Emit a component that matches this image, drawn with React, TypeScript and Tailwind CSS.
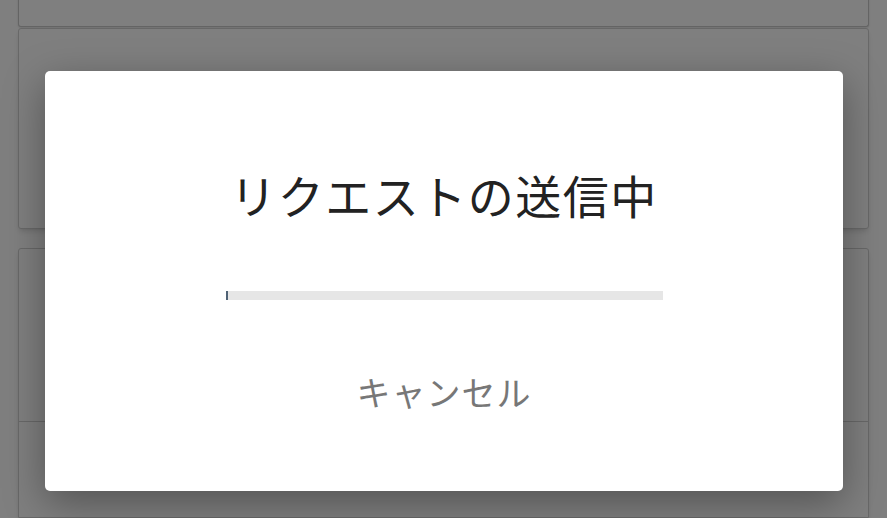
import React from 'react';

const App: React.FC = () => {
    return (
        <div
            className="relative w-[887px] h-[518px] overflow-hidden bg-white"
            style={{ fontFamily: '"Noto Sans CJK JP", "Noto Sans", sans-serif' }}
        >
            {/* page behind the dialog */}
            <div className="h-full px-[18px] flex flex-col">
                <div className="h-[35px] -mt-2 bg-white border-x border-b border-[#c8c8c8] rounded-b-[3px] shadow" />
                <div className="h-[201px] mt-[1px] bg-white border border-[#d0d0d0] rounded-[3px] shadow-md" />
                <div className="mt-[19px] flex-1 bg-white border border-[#d0d0d0] rounded-t-[3px] shadow-md flex flex-col">
                    <div className="h-[173px] border-b border-[#d0d0d0]" />
                </div>
            </div>

            {/* scrim */}
            <div className="absolute inset-0 bg-black/50" />

            {/* dialog */}
            <div className="absolute left-[45px] top-[71px] w-[798px] h-[420px] bg-white rounded-[5px] shadow-[0_12px_40px_rgba(0,0,0,0.35)] flex flex-col items-center">
                <h2 className="mt-[91px] text-[46px] leading-[64px] text-[#222] tracking-[1.5px]">
                    リクエストの送信中
                </h2>
                <div className="mt-[65px] w-[437px] h-[9px] bg-[#e6e6e6] flex">
                    <div className="w-[2px] h-full bg-[#4f6275]" />
                </div>
                <button className="mt-[68px] text-[34px] leading-[48px] text-[#777] tracking-[1px]">
                    キャンセル
                </button>
            </div>
        </div>
    );
};

export default App;
